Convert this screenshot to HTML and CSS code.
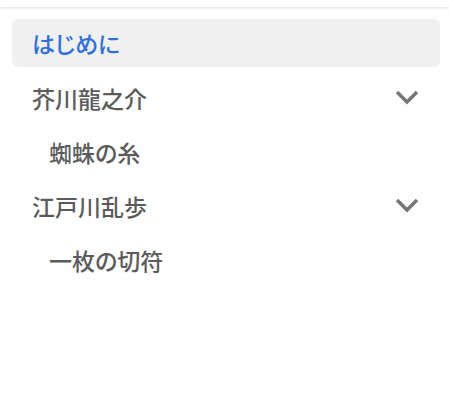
FILE: index.html
```html
<!DOCTYPE html>
<html lang="ja">
<head>
<meta charset="utf-8">
<link rel="stylesheet" href="styles.css">
</head>
<body>
<div class="topbar"></div>
<nav class="menu">
  <a class="item active">はじめに</a>
  <div class="item group">
    <span>芥川龍之介</span>
    <svg class="chev" viewBox="0 0 24 16" width="24" height="16"><path d="M2 2 L12 12 L22 2" fill="none" stroke="#757575" stroke-width="3.4"/></svg>
  </div>
  <a class="item child">蜘蛛の糸</a>
  <div class="item group">
    <span>江戸川乱歩</span>
    <svg class="chev" viewBox="0 0 24 16" width="24" height="16"><path d="M2 2 L12 12 L22 2" fill="none" stroke="#757575" stroke-width="3.4"/></svg>
  </div>
  <a class="item child">一枚の切符</a>
</nav>
</body>
</html>
```
FILE: styles.css
```css
html, body {
  margin: 0;
  padding: 0;
  background: #fff;
}
body {
  font-family: "Noto Sans CJK JP", "Noto Sans", sans-serif;
  width: 449px;
}
.topbar {
  height: 7px;
  background: #fff;
  box-shadow: 0 1px 3px rgba(0, 0, 0, 0.12);
}
.menu {
  display: flex;
  flex-direction: column;
  gap: 7px;
  padding: 12px 9px 0 12px;
}
.item {
  display: flex;
  align-items: center;
  justify-content: space-between;
  height: 48px;
  padding: 0 20px;
  border-radius: 6px;
  font-size: 23px;
  font-weight: 500;
  font-feature-settings: "palt";
  color: #5b5b5b;
  text-decoration: none;
}
.item.active {
  background: #f0f0f0;
  color: #2f6fe0;
}
.item.child {
  height: 46px;
  padding-left: 37px;
}
.chev {
  display: block;
  margin-right: 1px;
}
```
